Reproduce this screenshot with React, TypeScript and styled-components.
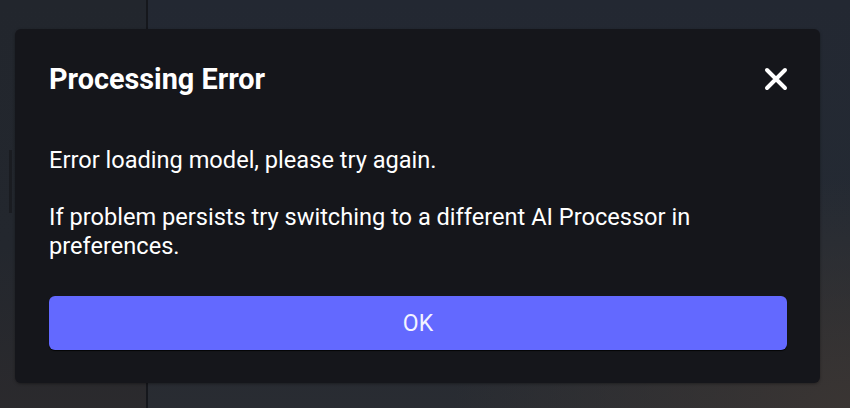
import React from "react";
import styled, { createGlobalStyle } from "styled-components";

const Global = createGlobalStyle`
  html, body { margin: 0; padding: 0; width: 850px; height: 408px; overflow: hidden; }
  body { font-family: Roboto, "Noto Sans", sans-serif; background: #22262e; }
  #root { width: 850px; height: 408px; }
`;

const Screen = styled.div`
  position: relative;
  width: 850px;
  height: 408px;
  overflow: hidden;
`;

const Backdrop = styled.div`
  display: grid;
  grid-template-columns: 146px 2px 1fr;
  width: 100%;
  height: 100%;
  background: linear-gradient(180deg, #232730 0%, #22262e 55%, #272a31 100%);
`;

const Sidebar = styled.div`
  display: flex;
  flex-direction: column;
  padding: 150px 0 0 9px;
  background: linear-gradient(180deg, #22262d 0%, #23272e 60%, #2b2a2d 100%);
`;

const ScrollThumb = styled.div`
  width: 3px;
  height: 63px;
  background: #1a1c21;
`;

const Divider = styled.div`
  background: #15171c;
`;

const Main = styled.div`
  background: radial-gradient(ellipse at 100% 100%, #3a3533 0%, rgba(40, 40, 44, 0) 40%),
    linear-gradient(180deg, #232832 0%, #242a33 60%, #292c32 100%);
`;

const Overlay = styled.div`
  position: absolute;
  inset: 0;
  display: flex;
  align-items: flex-start;
  padding: 29px 30px 0 15px;
`;

const Dialog = styled.div`
  box-sizing: border-box;
  width: 805px;
  height: 354px;
  background: #15161b;
  border-radius: 6px;
  box-shadow: 0 1px 3px rgba(0, 0, 0, 0.35);
  padding: 30px 33px 33px 34px;
  display: flex;
  flex-direction: column;
  color: #ffffff;
`;

const Header = styled.div`
  display: flex;
  align-items: center;
  justify-content: space-between;
  height: 40px;
`;

const Title = styled.h2`
  margin: 0;
  font-size: 28.8px;
  font-weight: 700;
`;

const CloseButton = styled.button`
  border: 0;
  background: none;
  padding: 0;
  margin-right: -2px;
  width: 26px;
  height: 26px;
  display: flex;
  align-items: center;
  justify-content: center;
  cursor: pointer;
`;

const Body = styled.div`
  margin-top: 47px;
  display: flex;
  flex-direction: column;
  gap: 27px;
  font-size: 23.6px;
  line-height: 29.5px;
`;

const Paragraph = styled.p`
  margin: 0;
`;

const OkButton = styled.button`
  margin-top: auto;
  height: 54px;
  width: 100%;
  border: 0;
  border-radius: 6px;
  background: #6369ff;
  color: #f4f4ff;
  font-family: Roboto, sans-serif;
  font-size: 23px;
  box-shadow: 0 1px 1px rgba(0, 0, 0, 0.8);
  cursor: pointer;
`;

export default function App() {
  return (
    <Screen>
      <Global />
      <Backdrop>
        <Sidebar>
          <ScrollThumb />
        </Sidebar>
        <Divider />
        <Main />
      </Backdrop>
      <Overlay>
        <Dialog role="dialog">
          <Header>
            <Title>Processing Error</Title>
            <CloseButton aria-label="Close">
              <svg width="24" height="24" viewBox="0 0 24 24">
                <path d="M3 3 L21 21 M21 3 L3 21" stroke="#ffffff" strokeWidth="4" strokeLinecap="round" />
              </svg>
            </CloseButton>
          </Header>
          <Body>
            <Paragraph>Error loading model, please try again.</Paragraph>
            <Paragraph>
              If problem persists try switching to a different AI Processor in preferences.
            </Paragraph>
          </Body>
          <OkButton>OK</OkButton>
        </Dialog>
      </Overlay>
    </Screen>
  );
}
